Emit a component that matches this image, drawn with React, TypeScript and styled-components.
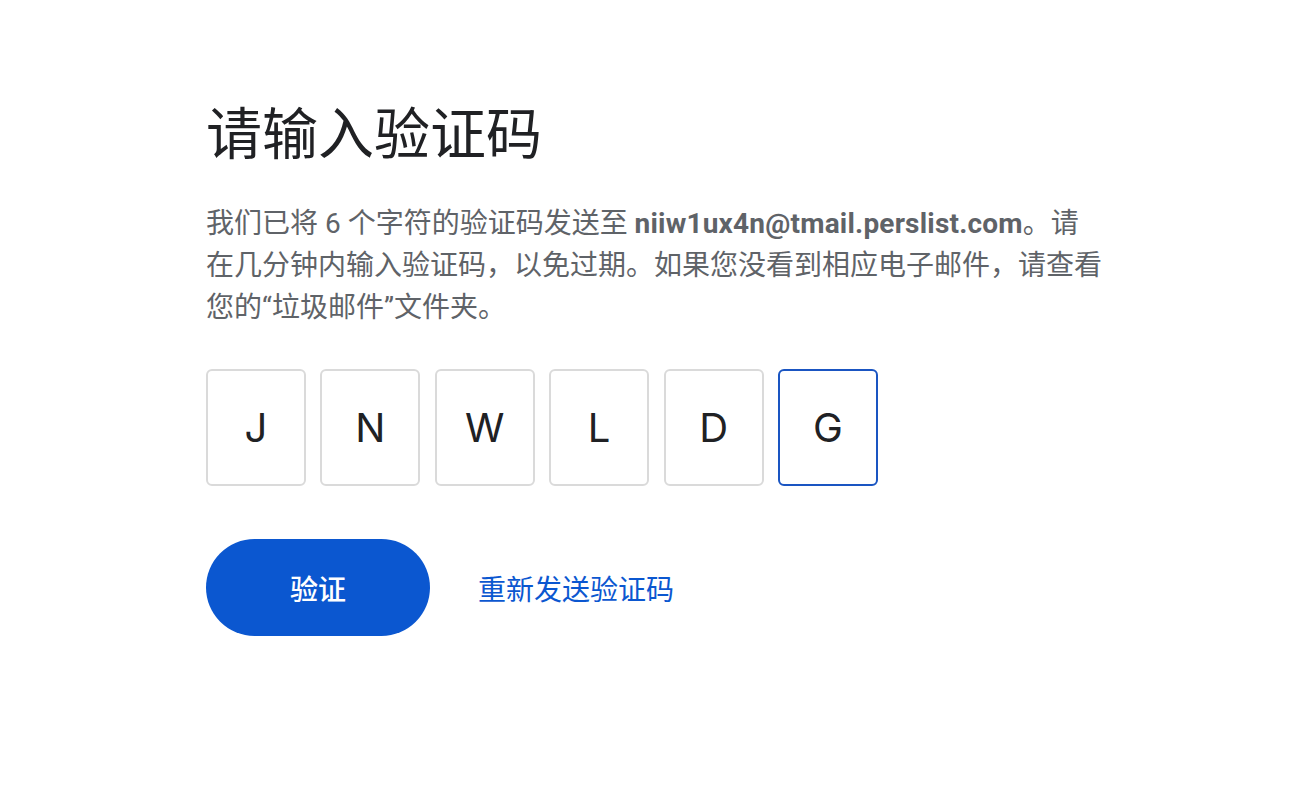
import styled, { createGlobalStyle } from "styled-components";

const GlobalStyle = createGlobalStyle`
  html, body {
    margin: 0;
    padding: 0;
    background: #fff;
  }
  body {
    font-family: Roboto, "Noto Sans CJK SC", sans-serif;
  }
`;

const code = ["J", "N", "W", "L", "D", "G"];

export default function App() {
  return (
    <>
      <GlobalStyle />
      <Page>
        <Title>请输入验证码</Title>
        <Description>
          我们已将 6 个字符的验证码发送至{" "}
          <Email>niiw1ux4n@tmail.perslist.com</Email>。请在几分钟内输入验证码，以免过期。如果您没看到相应电子邮件，请查看您的“垃圾邮件”文件夹。
        </Description>
        <CodeRow>
          {code.map((c, i) => (
            <CodeBox key={i} $active={i === code.length - 1}>
              {c}
            </CodeBox>
          ))}
        </CodeRow>
        <Actions>
          <VerifyButton>验证</VerifyButton>
          <ResendLink href="#">重新发送验证码</ResendLink>
        </Actions>
      </Page>
    </>
  );
}

const Page = styled.div`
  padding: 96px 0 0 206px;
  display: flex;
  flex-direction: column;
  align-items: flex-start;
`;

const Title = styled.h1`
  margin: 0;
  color: #202124;
  font-family: "Noto Sans CJK SC", sans-serif;
  font-size: 56px;
  font-weight: 400;
  line-height: 67px;
`;

const Description = styled.p`
  margin: 40px 0 0;
  width: 898px;
  color: #5f6368;
  font-size: 28px;
  line-height: 42px;
  font-weight: 400;
`;

const Email = styled.span`
  font-weight: 700;
  letter-spacing: 0.2px;
`;

const CodeRow = styled.div`
  margin-top: 40px;
  display: flex;
  gap: 14.4px;
`;

const CodeBox = styled.div<{ $active?: boolean }>`
  box-sizing: border-box;
  width: 100px;
  height: 117px;
  border: 2px solid ${(p) => (p.$active ? "#1a55c2" : "#dadada")};
  border-radius: 6px;
  display: flex;
  align-items: center;
  justify-content: center;
  color: #202124;
  font-family: Inter, Roboto, sans-serif;
  font-size: 40px;
  font-weight: 400;
`;

const Actions = styled.div`
  margin-top: 53px;
  display: flex;
  align-items: center;
  gap: 48px;
`;

const VerifyButton = styled.button`
  width: 224px;
  height: 97px;
  border: 0;
  border-radius: 49px;
  background: #0b57d0;
  color: #fff;
  font-family: "Noto Sans CJK SC", sans-serif;
  font-size: 28px;
  font-weight: 500;
  cursor: pointer;
`;

const ResendLink = styled.a`
  color: #0b57d0;
  font-family: "Noto Sans CJK SC", sans-serif;
  font-size: 28px;
  text-decoration: none;
`;
